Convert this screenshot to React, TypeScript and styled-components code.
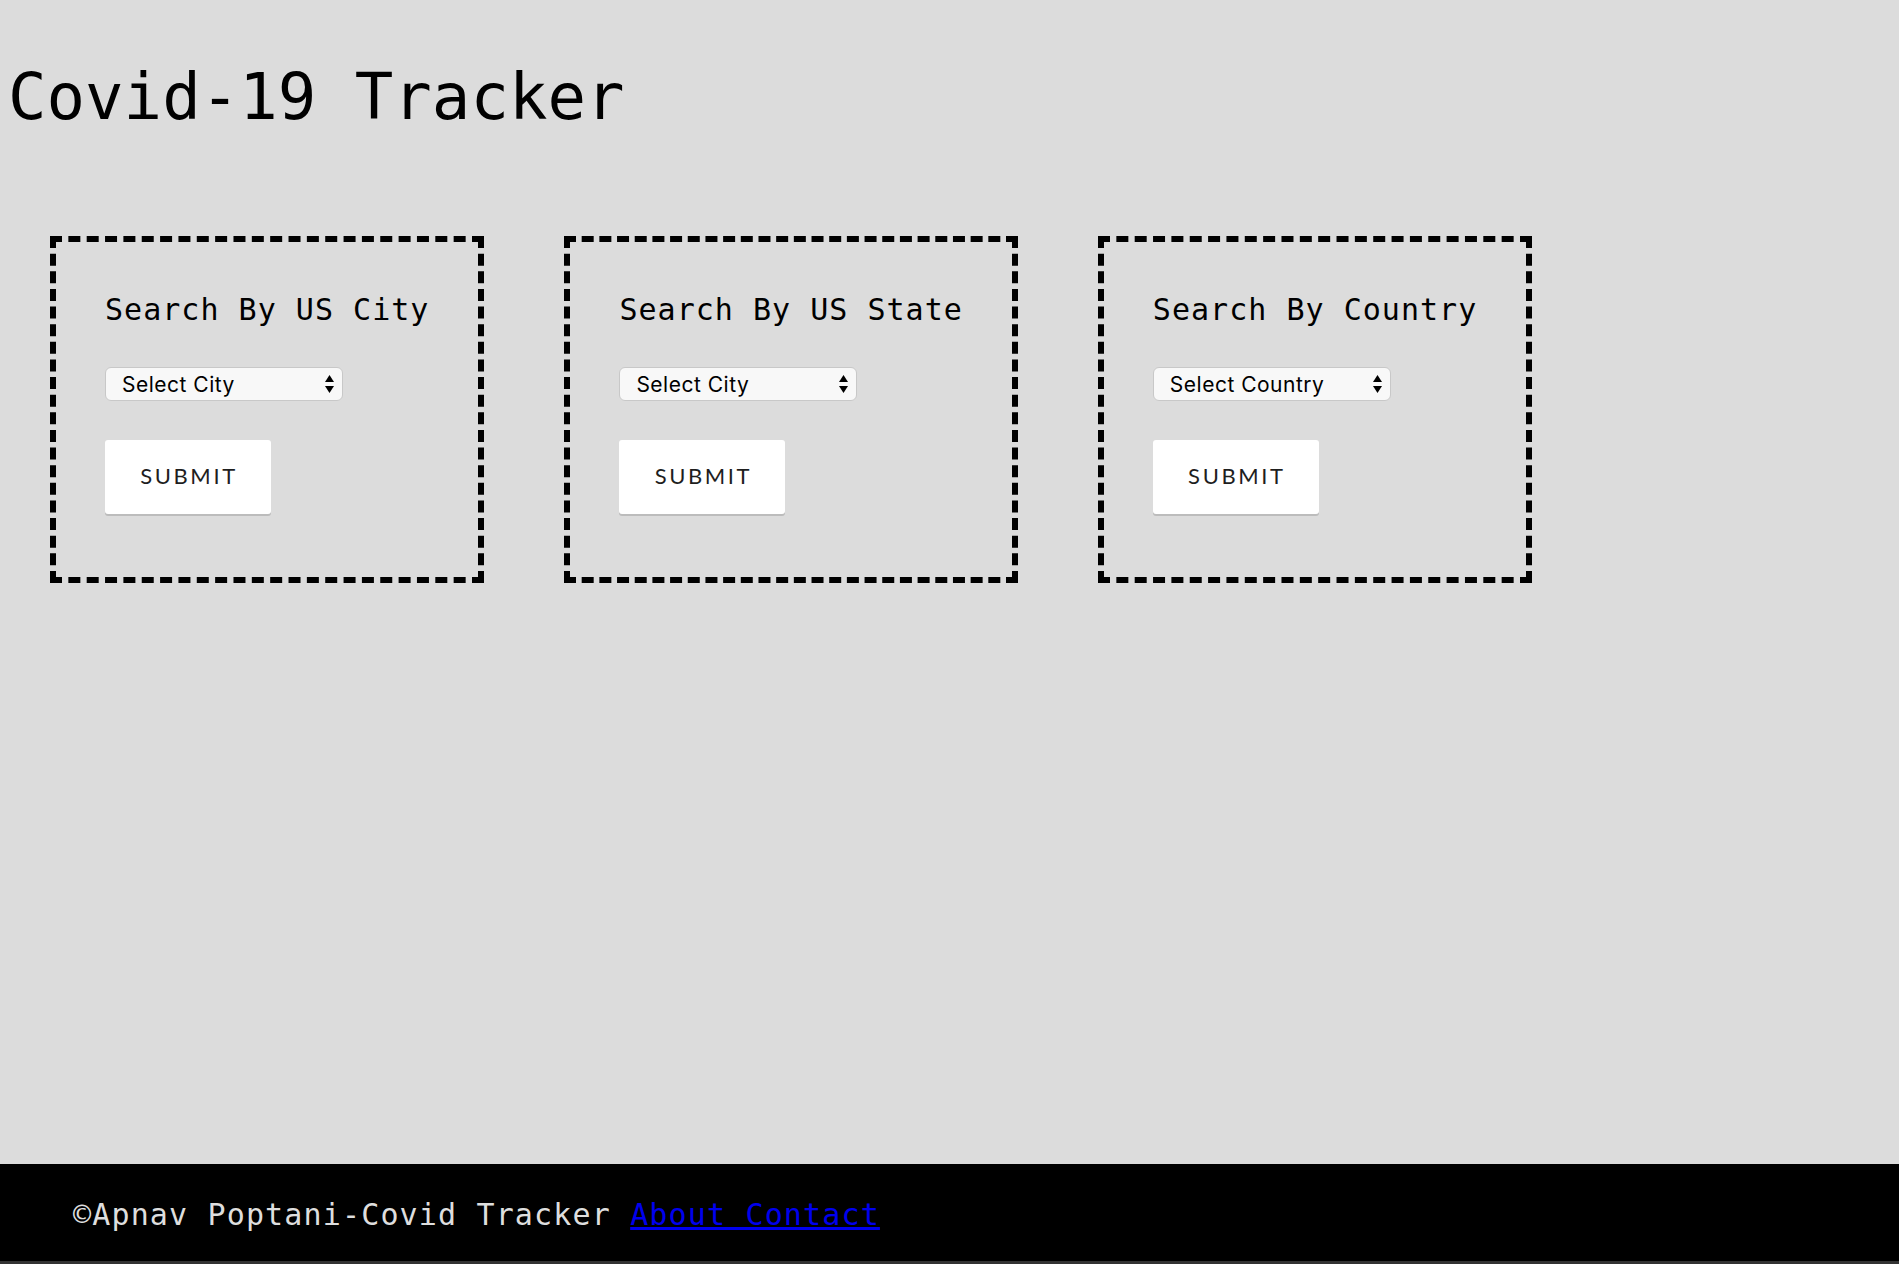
import React from "react";
import styled, { createGlobalStyle } from "styled-components";

const GlobalStyle = createGlobalStyle`
  html, body {
    margin: 0;
    padding: 0;
    background: #dcdcdc;
  }
  * { box-sizing: border-box; }
`;

const mono = `"DejaVu Sans Mono", "Liberation Mono", monospace`;

const Page = styled.div`
  min-height: 100vh;
  display: flex;
  flex-direction: column;
  background: #dcdcdc;
`;

const Title = styled.h1`
  margin: 60px 0 0 8px;
  font-family: ${mono};
  font-size: 64px;
  font-weight: normal;
  line-height: normal;
  color: #000;
`;

const Cards = styled.div`
  display: flex;
  align-items: flex-start;
  gap: 80px;
  margin-top: 102px;
  padding-left: 50px;
`;

const Card = styled.section`
  display: flex;
  flex-direction: column;
  align-items: flex-start;
  border: 6px dashed #000;
  padding: 50px 49px 63px;
`;

const CardTitle = styled.h2`
  margin: 0 0 40px;
  font-family: ${mono};
  font-size: 30px;
  font-weight: normal;
  letter-spacing: 1.02px;
  line-height: normal;
  white-space: nowrap;
  color: #000;
`;

const SelectWrap = styled.div`
  position: relative;
  width: 238px;
  height: 34px;
  margin-bottom: 39px;
`;

const Select = styled.select`
  appearance: none;
  -webkit-appearance: none;
  width: 100%;
  height: 100%;
  margin: 0;
  padding: 0 30px 0 16px;
  background: #f8f8f8;
  border: 1px solid #c8c8c8;
  border-radius: 6px;
  font-family: Inter, "Liberation Sans", sans-serif;
  font-size: 21px;
  letter-spacing: 0.5px;
  color: #000;
  outline: none;
`;

const Arrows = styled.svg`
  position: absolute;
  right: 8px;
  top: 7px;
  width: 11px;
  height: 20px;
  pointer-events: none;
`;

const SubmitButton = styled.button`
  width: 166px;
  height: 74px;
  background: #fff;
  border: none;
  border-radius: 3px;
  box-shadow: 0 2px 0 #bcbcbc;
  font-family: Lato, "Liberation Sans", sans-serif;
  font-size: 22px;
  letter-spacing: 2.6px;
  color: #1e1e1e;
  text-transform: uppercase;
  padding: 0 0 3px 2px;
  cursor: pointer;
`;

const Spacer = styled.div`
  flex: 1;
`;

const Footer = styled.footer`
  height: 100px;
  background: #000;
  border-bottom: 3px solid #333;
  padding: 33px 0 0 73px;
  font-family: ${mono};
  font-size: 30px;
  letter-spacing: 1.15px;
  line-height: normal;
  color: #dedede;
  white-space: nowrap;
`;

const FooterLink = styled.a`
  color: #0000ee;
  text-decoration: underline;
`;

type SearchCardProps = { heading: string; placeholder: string };

const SearchCard = ({ heading, placeholder }: SearchCardProps) => (
  <Card>
    <CardTitle>{heading}</CardTitle>
    <SelectWrap>
      <Select defaultValue="">
        <option value="">{placeholder}</option>
      </Select>
      <Arrows viewBox="0 0 11 20">
        <polygon points="5.5,1 10,8 1,8" fill="#000" />
        <polygon points="1,12 10,12 5.5,19" fill="#000" />
      </Arrows>
    </SelectWrap>
    <SubmitButton type="button">Submit</SubmitButton>
  </Card>
);

export default function App() {
  return (
    <>
      <GlobalStyle />
      <Page>
        <Title>Covid-19 Tracker</Title>
        <Cards>
          <SearchCard heading="Search By US City" placeholder="Select City" />
          <SearchCard heading="Search By US State" placeholder="Select City" />
          <SearchCard heading="Search By Country" placeholder="Select Country" />
        </Cards>
        <Spacer />
        <Footer>
          ©Apnav Poptani-Covid Tracker{" "}
          <FooterLink href="#">About Contact</FooterLink>
        </Footer>
      </Page>
    </>
  );
}
